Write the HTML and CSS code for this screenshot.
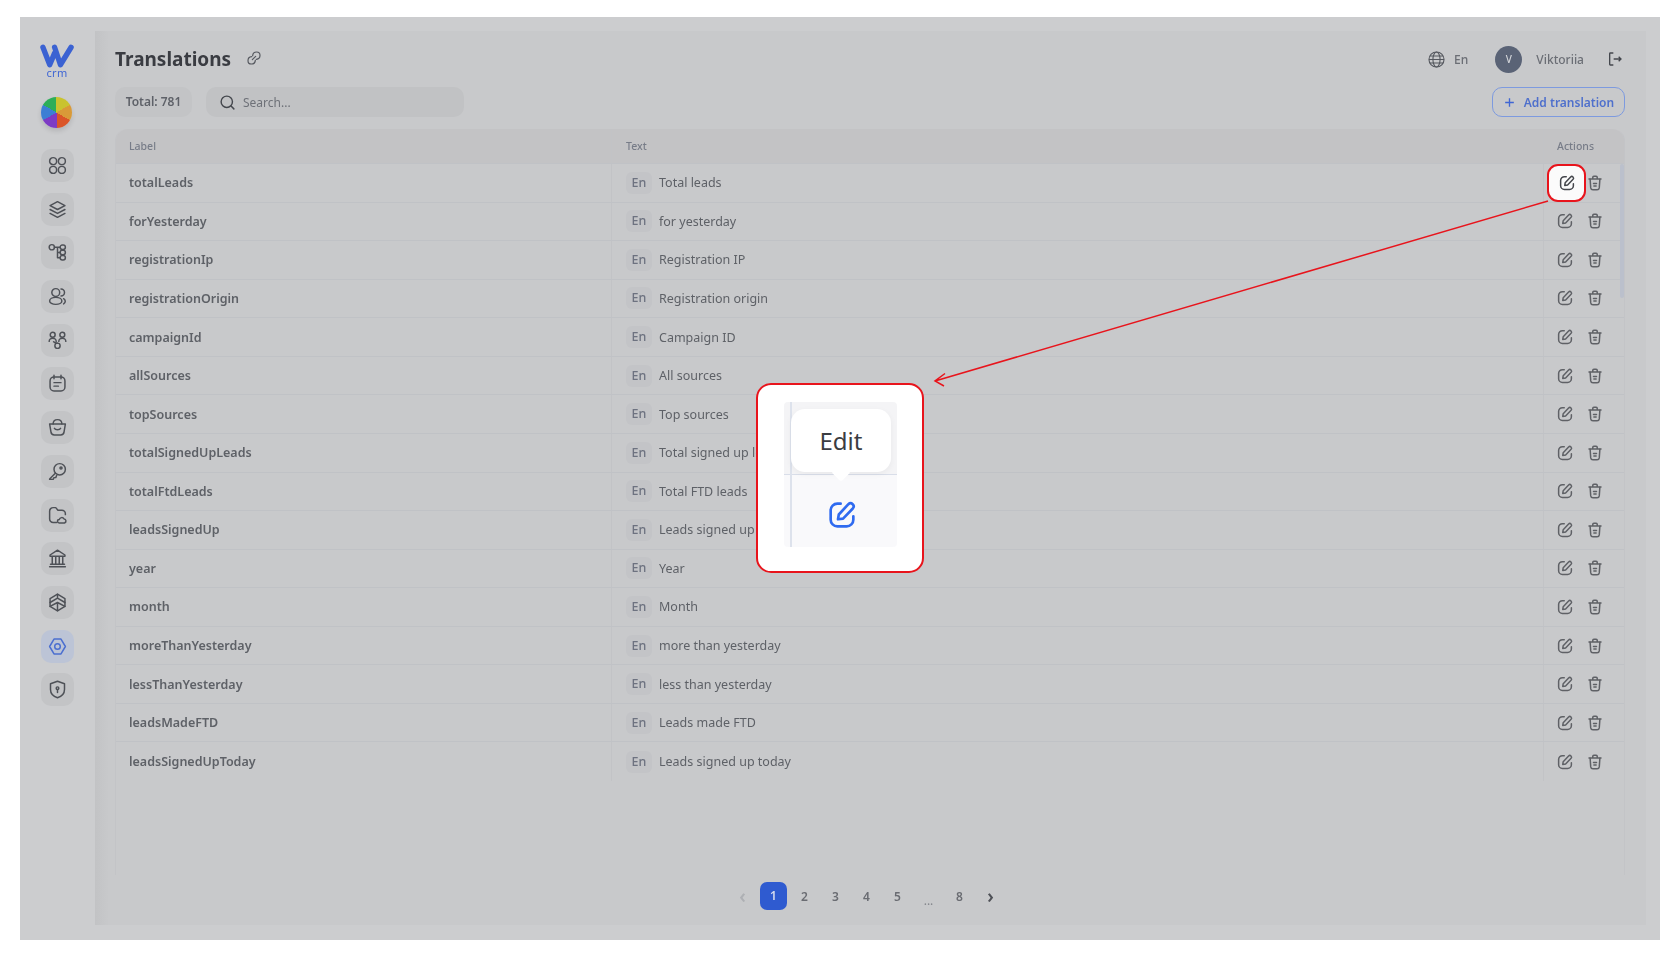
FILE: index.html
```html
<!DOCTYPE html>
<html lang="en">
<head>
    <meta charset="UTF-8">
    <title>Translations</title>
    <link rel="stylesheet" href="styles.css">
</head>
<body>

<svg class="defs" width="0" height="0">
    <symbol id="i-edit" viewBox="0 0 24 24">
        <path d="M11 3.5H8.5a5 5 0 0 0-5 5v7a5 5 0 0 0 5 5h7a5 5 0 0 0 5-5V13"/>
        <path d="M9 15.2l.6-3.6 7.2-7.7a2.3 2.3 0 0 1 3.3 3.2l-7.3 7.6z"/>
    </symbol>
    <symbol id="i-trash" viewBox="0 0 24 24">
        <path d="M4 6.5h16M9 6V4.5a1.5 1.5 0 0 1 1.5-1.5h3A1.5 1.5 0 0 1 15 4.5V6"/>
        <path d="M5.5 7l.8 11.5a3 3 0 0 0 3 2.5h5.4a3 3 0 0 0 3-2.5L18.5 7"/>
        <path d="M10 12.5h4M10.5 16h3"/>
    </symbol>
</svg>

<div class="frame">
    <div class="app">
        <aside class="sidebar">
            <div class="logo">
                <svg viewBox="0 0 36 25" width="35" height="25"><path d="M3 3l7 18 5-12M15 3l6 18 11-18" fill="none" stroke="#3b62d2" stroke-width="5.5" stroke-linecap="round" stroke-linejoin="round"/></svg>
                <span>crm</span>
            </div>
            <div class="pie"></div>
            <nav class="nav">
                <a class="tile"><svg viewBox="0 0 24 24"><circle cx="7" cy="7" r="4"/><circle cx="17" cy="7" r="4"/><circle cx="7" cy="17" r="4"/><circle cx="17" cy="17" r="4"/></svg></a>
                <a class="tile"><svg viewBox="0 0 24 24"><path d="M12 3l8.5 4.5L12 12 3.5 7.5z"/><path d="M3.5 12l8.500 4.500 8.500-4.500M3.500 16.500L12 21l8.500-4.500"/></svg></a>
                <a class="tile"><svg viewBox="0 0 24 24"><circle cx="5.500" cy="6" r="3"/><path d="M8.500 6h6M12 6v12h3M12 12h3"/><rect x="15" y="3.500" width="6" height="5" rx="2.500"/><rect x="15" y="9.500" width="6" height="5" rx="2.500"/><rect x="15" y="15.500" width="6" height="5" rx="2.500"/></svg></a>
                <a class="tile"><svg viewBox="0 0 24 24"><circle cx="10" cy="7.500" r="4.500"/><ellipse cx="10" cy="17" rx="7" ry="4"/><path d="M16 3.500a4 4 0 0 1 0 8M19 14.500c2.500 1.500 2.500 4.500 0 6"/></svg></a>
                <a class="tile"><svg viewBox="0 0 24 24"><circle cx="6.500" cy="5.500" r="2.800"/><circle cx="17.500" cy="5.500" r="2.800"/><circle cx="12" cy="18" r="3"/><path d="M2.500 13c0-2 2-3.500 4-3.500s4 1.500 4 3.500M13.500 13c0-2 2-3.500 4-3.500s4 1.500 4 3.500M7.500 13.500c1 1 2 1.500 4.500 1.500"/></svg></a>
                <a class="tile"><svg viewBox="0 0 24 24"><rect x="3.500" y="4.500" width="17" height="16" rx="4.500"/><path d="M8 2.500v4M16 2.500v4M8 11h8M8 15h5"/></svg></a>
                <a class="tile"><svg viewBox="0 0 24 24"><path d="M3 8h18l-1.500 9a4 4 0 0 1-4 3.500h-7a4 4 0 0 1-4-3.500z"/><path d="M7 8c0-3 2-5 5-5s5 2 5 5M8.500 13c1 2 6 2 7 0"/></svg></a>
                <a class="tile"><svg viewBox="0 0 24 24"><circle cx="14.500" cy="9.500" r="6.500"/><path d="M9.500 14L3 20.500V21h4l1-2h2l1-2.500"/><circle cx="16" cy="8" r="1.200"/></svg></a>
                <a class="tile"><svg viewBox="0 0 24 24"><path d="M11 20H7a4 4 0 0 1-4-4V7a4 4 0 0 1 4-4h3l2.500 3H17a4 4 0 0 1 4 4v1"/><path d="M14 20.500a2 2 0 0 1 0-4 3 3 0 0 1 5.500-.5 2.300 2.300 0 0 1 .5 4.500z"/></svg></a>
                <a class="tile"><svg viewBox="0 0 24 24"><path d="M12 2.500L3.500 8v1.500h17V8zM6 10v8M10 10v8M14 10v8M18 10v8M4 18.500h16M3 21.500h18"/></svg></a>
                <a class="tile"><svg viewBox="0 0 24 24"><path d="M12 2.500l8.500 5v9l-8.500 5-8.500-5v-9z"/><path d="M3.500 12L12 7l8.500 5M12 7V2.500M12 21.500V12M3.500 16.500L12 12l8.500 4.500"/></svg></a>
                <a class="tile active"><svg viewBox="0 0 24 24"><path d="M8 3.500h8l5 8.500-5 8.500H8L3 12z" stroke-linejoin="round"/><circle cx="12" cy="12" r="3.200"/></svg></a>
                <a class="tile"><svg viewBox="0 0 24 24"><path d="M12 2.500l8 3v6.500c0 4.500-3.500 8-8 9.500-4.500-1.500-8-5-8-9.500V5.500z"/><circle cx="12" cy="10.500" r="1.500"/><path d="M12 12v3.500"/></svg></a>
            </nav>
        </aside>

        <main class="main">
            <header class="topbar">
                <h1>Translations</h1>
                <svg class="link-icon" viewBox="0 0 24 24"><path d="M10 8.500a6 6 0 0 1 6-5.500 5 5 0 0 1 5 5 6 6 0 0 1-5.500 6"/><path d="M14 15.500a6 6 0 0 1-6 5.500 5 5 0 0 1-5-5 6 6 0 0 1 5.500-6"/><path d="M9.500 14.500l5-5"/></svg>
                <div class="user-area">
                    <svg class="globe" viewBox="0 0 24 24"><circle cx="12" cy="12" r="9.500"/><ellipse cx="12" cy="12" rx="4.500" ry="9.500"/><path d="M2.500 12h19M3.800 7.500h16.400M3.800 16.500h16.400"/></svg>
                    <span class="lang">En</span>
                    <span class="avatar">V</span>
                    <span class="username">Viktoriia</span>
                    <svg class="logout" viewBox="0 0 24 24"><path d="M9.500 3H5a1 1 0 0 0-1 1v16a1 1 0 0 0 1 1h4.500"/><path d="M10 12h11M17.500 8.500L21 12l-3.500 3.500"/></svg>
                </div>
            </header>

            <div class="toolbar">
                <span class="total">Total: 781</span>
                <label class="search">
                    <svg viewBox="0 0 24 24"><circle cx="11" cy="11" r="8"/><path d="M17 17l4 4"/></svg>
                    <span>Search...</span>
                </label>
                <button class="add-btn"><svg viewBox="0 0 24 24"><path d="M12 4v16M4 12h16"/></svg>Add translation</button>
            </div>

            <div class="table">
                <div class="row head">
                    <div class="cell">Label</div>
                    <div class="cell">Text</div>
                    <div class="cell">Actions</div>
                </div>
                <div class="row">
                    <div class="cell label">totalLeads</div>
                    <div class="cell text"><span class="tag">En</span>Total leads</div>
                    <div class="cell actions"><svg><use href="#i-edit"/></svg><svg><use href="#i-trash"/></svg></div>
                </div>
                <div class="row">
                    <div class="cell label">forYesterday</div>
                    <div class="cell text"><span class="tag">En</span>for yesterday</div>
                    <div class="cell actions"><svg><use href="#i-edit"/></svg><svg><use href="#i-trash"/></svg></div>
                </div>
                <div class="row">
                    <div class="cell label">registrationIp</div>
                    <div class="cell text"><span class="tag">En</span>Registration IP</div>
                    <div class="cell actions"><svg><use href="#i-edit"/></svg><svg><use href="#i-trash"/></svg></div>
                </div>
                <div class="row">
                    <div class="cell label">registrationOrigin</div>
                    <div class="cell text"><span class="tag">En</span>Registration origin</div>
                    <div class="cell actions"><svg><use href="#i-edit"/></svg><svg><use href="#i-trash"/></svg></div>
                </div>
                <div class="row">
                    <div class="cell label">campaignId</div>
                    <div class="cell text"><span class="tag">En</span>Campaign ID</div>
                    <div class="cell actions"><svg><use href="#i-edit"/></svg><svg><use href="#i-trash"/></svg></div>
                </div>
                <div class="row">
                    <div class="cell label">allSources</div>
                    <div class="cell text"><span class="tag">En</span>All sources</div>
                    <div class="cell actions"><svg><use href="#i-edit"/></svg><svg><use href="#i-trash"/></svg></div>
                </div>
                <div class="row">
                    <div class="cell label">topSources</div>
                    <div class="cell text"><span class="tag">En</span>Top sources</div>
                    <div class="cell actions"><svg><use href="#i-edit"/></svg><svg><use href="#i-trash"/></svg></div>
                </div>
                <div class="row">
                    <div class="cell label">totalSignedUpLeads</div>
                    <div class="cell text"><span class="tag">En</span>Total signed up leads</div>
                    <div class="cell actions"><svg><use href="#i-edit"/></svg><svg><use href="#i-trash"/></svg></div>
                </div>
                <div class="row">
                    <div class="cell label">totalFtdLeads</div>
                    <div class="cell text"><span class="tag">En</span>Total FTD leads</div>
                    <div class="cell actions"><svg><use href="#i-edit"/></svg><svg><use href="#i-trash"/></svg></div>
                </div>
                <div class="row">
                    <div class="cell label">leadsSignedUp</div>
                    <div class="cell text"><span class="tag">En</span>Leads signed up</div>
                    <div class="cell actions"><svg><use href="#i-edit"/></svg><svg><use href="#i-trash"/></svg></div>
                </div>
                <div class="row">
                    <div class="cell label">year</div>
                    <div class="cell text"><span class="tag">En</span>Year</div>
                    <div class="cell actions"><svg><use href="#i-edit"/></svg><svg><use href="#i-trash"/></svg></div>
                </div>
                <div class="row">
                    <div class="cell label">month</div>
                    <div class="cell text"><span class="tag">En</span>Month</div>
                    <div class="cell actions"><svg><use href="#i-edit"/></svg><svg><use href="#i-trash"/></svg></div>
                </div>
                <div class="row">
                    <div class="cell label">moreThanYesterday</div>
                    <div class="cell text"><span class="tag">En</span>more than yesterday</div>
                    <div class="cell actions"><svg><use href="#i-edit"/></svg><svg><use href="#i-trash"/></svg></div>
                </div>
                <div class="row">
                    <div class="cell label">lessThanYesterday</div>
                    <div class="cell text"><span class="tag">En</span>less than yesterday</div>
                    <div class="cell actions"><svg><use href="#i-edit"/></svg><svg><use href="#i-trash"/></svg></div>
                </div>
                <div class="row">
                    <div class="cell label">leadsMadeFTD</div>
                    <div class="cell text"><span class="tag">En</span>Leads made FTD</div>
                    <div class="cell actions"><svg><use href="#i-edit"/></svg><svg><use href="#i-trash"/></svg></div>
                </div>
                <div class="row last">
                    <div class="cell label">leadsSignedUpToday</div>
                    <div class="cell text"><span class="tag">En</span>Leads signed up today</div>
                    <div class="cell actions"><svg><use href="#i-edit"/></svg><svg><use href="#i-trash"/></svg></div>
                </div>
                <div class="scroll-thumb"></div>
            </div>

            <div class="pagination">
                <span class="page arrow off">&lsaquo;</span>
                <span class="page current">1</span>
                <span class="page">2</span>
                <span class="page">3</span>
                <span class="page">4</span>
                <span class="page">5</span>
                <span class="page dots">...</span>
                <span class="page">8</span>
                <span class="page arrow">&rsaquo;</span>
            </div>
        </main>
    </div>

    <!-- annotation over the screenshot -->
    <div class="highlight"><svg><use href="#i-edit"/></svg></div>
    <svg class="arrow-line" width="1640" height="923" viewBox="0 0 1640 923">
        <path d="M1528 184L915 364M925 356.500L915 364 924 369"/>
    </svg>
    <div class="callout">
        <div class="callout-inner">
            <div class="tooltip">Edit</div>
            <svg class="callout-icon"><use href="#i-edit"/></svg>
        </div>
    </div>
</div>

</body>
</html>
```

FILE: styles.css
```css
* {
    box-sizing: border-box;
}
body {
    margin: 0;
    padding: 17px 20px 0;
    height: 963px;
    overflow: hidden;
    background: #fff;
    font-family: 'Noto Sans', sans-serif;
    color: #55585f;
}
.defs {
    position: absolute;
}
symbol path, symbol circle {
    fill: none;
    stroke: currentColor;
    stroke-width: 2;
    stroke-linecap: round;
    stroke-linejoin: round;
}
.frame {
    position: relative;
    width: 1640px;
    height: 923px;
}
.app {
    display: flex;
    width: 100%;
    height: 100%;
    padding: 14px 14px 15px 0;
    background: #cccdcf;
    filter: blur(0.6px);
}

/* sidebar */
.sidebar {
    width: 75px;
    flex-shrink: 0;
    display: flex;
    flex-direction: column;
    align-items: center;
    padding-left: 13px;
    padding-right: 14px;
}
.logo {
    display: flex;
    flex-direction: column;
    align-items: center;
    margin-top: 13px;
    height: 34px;
    width: 36px;
}
.logo span {
    font-size: 11px;
    line-height: 8px;
    color: #3f66d4;
    letter-spacing: 0.3px;
}
.pie {
    width: 31px;
    height: 31px;
    flex-shrink: 0;
    margin-top: 19px;
    margin-left: -2px;
    border-radius: 50%;
    background: conic-gradient(#c9c32f 0 60deg, #d99a38 60deg 120deg, #db5528 120deg 180deg, #7d3bc4 180deg 240deg, #3d7fd4 240deg 300deg, #2cae58 300deg 360deg);
    box-shadow: 0 3px 5px rgba(0, 0, 0, 0.12);
}
.nav {
    display: flex;
    flex-direction: column;
    gap: 10.7px;
    margin-top: 21px;
}
.tile {
    width: 33px;
    height: 33px;
    display: flex;
    align-items: center;
    justify-content: center;
    border-radius: 10px;
    background: #c3c4c6;
    color: #4e5157;
}
.tile svg {
    width: 21px;
    height: 21px;
    fill: none;
    stroke: currentColor;
    stroke-width: 1.7;
    stroke-linecap: round;
    stroke-linejoin: round;
}
.tile.active {
    background: #bcc4d6;
    color: #4b6fd0;
}

/* main panel */
.main {
    flex: 1;
    display: flex;
    flex-direction: column;
    padding: 16px 21px 0 20px;
    background: linear-gradient(90deg, #c2c3c5, #c8c9cb 14px);
}
.topbar {
    display: flex;
    align-items: center;
    height: 24px;
}
h1 {
    margin: 0;
    font-size: 19px;
    font-weight: 700;
    color: #3a3c42;
}
.link-icon {
    width: 16px;
    height: 16px;
    margin-left: 15px;
    margin-top: -2px;
    fill: none;
    stroke: #55585f;
    stroke-width: 1.8;
    stroke-linecap: round;
}
.user-area {
    margin-left: auto;
    display: flex;
    align-items: center;
    font-size: 12px;
    font-weight: 500;
    color: #6b6e75;
}
.globe {
    width: 19px;
    height: 19px;
    fill: none;
    stroke: #55585f;
    stroke-width: 1.4;
}
.lang {
    margin-left: 8px;
}
.avatar {
    width: 27px;
    height: 27px;
    margin-left: 27px;
    display: flex;
    align-items: center;
    justify-content: center;
    border-radius: 50%;
    background: #5a6376;
    color: #d4d6da;
    font-size: 10px;
}
.username {
    margin-left: 14px;
}
.logout {
    width: 16px;
    height: 16px;
    margin-left: 23px;
    margin-right: 2px;
    fill: none;
    stroke: #44474d;
    stroke-width: 2;
}
.toolbar {
    display: flex;
    align-items: center;
    gap: 14px;
    height: 30px;
    margin-top: 16px;
}
.total {
    width: 77px;
    height: 30px;
    line-height: 29px;
    text-align: center;
    border-radius: 10px;
    background: #c3c4c6;
    font-size: 12px;
    font-weight: 600;
    color: #5e6168;
}
.search {
    width: 258px;
    height: 30px;
    display: flex;
    align-items: center;
    padding-left: 13px;
    border-radius: 10px;
    background: #c1c2c4;
    font-size: 12px;
    color: #6e7178;
}
.search svg {
    width: 17px;
    height: 17px;
    margin-right: 7px;
    fill: none;
    stroke: #44474d;
    stroke-width: 2;
    stroke-linecap: round;
}
.add-btn {
    margin-left: auto;
    width: 133px;
    height: 30px;
    display: flex;
    align-items: center;
    justify-content: center;
    gap: 8px;
    border: 1.5px solid #7d9adf;
    border-radius: 10px;
    background: transparent;
    color: #4f70cc;
    font-family: inherit;
    font-size: 12px;
    font-weight: 600;
}
.add-btn svg {
    width: 13px;
    height: 13px;
    fill: none;
    stroke: #3f66d4;
    stroke-width: 2.5;
}

/* table */
.table {
    position: relative;
    height: 746px;
    margin-top: 12px;
    border-right: 1px solid #c3c4c7;
    border-left: 1px solid #c3c4c7;
    border-radius: 12px 12px 0 0;
}
.row {
    display: grid;
    grid-template-columns: 495px 932px 1fr;
    height: 38.57px;
    border-bottom: 1px solid #c0c2c6;
}
.row.last {
    border-bottom: none;
}
.row.head {
    height: 35px;
    background: #c3c3c5;
    border-radius: 12px 12px 0 0;
    font-size: 10.5px;
    font-weight: 500;
    color: #777c88;
}
.cell {
    display: flex;
    align-items: center;
    padding-left: 13px;
}
.cell + .cell {
    border-left: 1px solid #c2c3c6;
    padding-left: 14px;
}
.head .cell:last-child {
    padding-left: 13px;
}
.label {
    font-size: 12.5px;
    font-weight: 600;
    color: #5e6167;
}
.text {
    font-size: 12.5px;
    color: #5e6167;
}
.tag {
    width: 26px;
    height: 22px;
    line-height: 22px;
    margin-right: 7px;
    text-align: center;
    border-radius: 6px;
    background: #c3c4c7;
    color: #6d7280;
    font-weight: 500;
}
.actions {
    gap: 12px;
    padding-left: 12px !important;
    color: #5f6166;
}
.actions svg {
    width: 18px;
    height: 18px;
}
.scroll-thumb {
    position: absolute;
    top: 35px;
    right: 0;
    width: 4px;
    height: 134px;
    border-radius: 2px;
    background: #bbc0cc;
}

/* pagination */
.pagination {
    display: flex;
    justify-content: center;
    align-items: center;
    height: 28px;
    margin-top: 7px;
    padding-right: 7px;
}
.page {
    width: 31px;
    text-align: center;
    font-size: 12px;
    font-weight: 600;
    color: #6a6c72;
}
.page.current {
    width: 27px;
    height: 28px;
    line-height: 27px;
    margin: 0 2px;
    border-radius: 7px;
    background: #2f5bd0;
    color: #d6dcee;
}
.page.arrow {
    font-size: 19px;
    line-height: 20px;
    color: #4e5056;
}
.page.off {
    color: #aeb0b4;
}
.page.dots {
    font-weight: 400;
    padding-top: 8px;
    color: #85878d;
}

/* annotation */
.highlight {
    position: absolute;
    left: 1527px;
    top: 147px;
    width: 39px;
    height: 38px;
    display: flex;
    align-items: center;
    justify-content: center;
    border: 2px solid #e8141c;
    border-radius: 11px;
    background: #fbfbfb;
    color: #45474c;
}
.highlight svg {
    width: 18px;
    height: 18px;
}
.arrow-line {
    position: absolute;
    left: 0;
    top: 0;
    fill: none;
    stroke: #e8141c;
    stroke-width: 1.5;
}
.callout {
    position: absolute;
    left: 736px;
    top: 366px;
    width: 168px;
    height: 190px;
    padding: 17px 25px 24px 26px;
    border: 2px solid #e8141c;
    border-radius: 15px;
    background: #fff;
}
.callout-inner {
    position: relative;
    height: 100%;
    background: linear-gradient(#f4f4f6 72px, #d9dee9 72px, #d9dee9 73px, #f9f9fb 73px);
    border-radius: 4px;
}
.callout-inner::before {
    content: "";
    position: absolute;
    left: 6px;
    top: 0;
    bottom: 0;
    width: 2px;
    background: #dde2ec;
}
.tooltip {
    position: absolute;
    left: 7px;
    top: 7px;
    width: 100px;
    height: 63px;
    display: flex;
    align-items: center;
    justify-content: center;
    border-radius: 14px;
    background: #fff;
    box-shadow: 0 2px 6px rgba(0, 0, 0, 0.05);
    font-size: 24px;
    color: #3b3d42;
}
.tooltip::after {
    content: "";
    position: absolute;
    left: 43px;
    bottom: -7px;
    width: 14px;
    height: 14px;
    border-radius: 3px;
    background: #fff;
    transform: rotate(45deg);
}
.callout-icon {
    position: absolute;
    left: 42px;
    top: 97px;
    width: 32px;
    height: 32px;
    color: #2f6bf0;
}
```
